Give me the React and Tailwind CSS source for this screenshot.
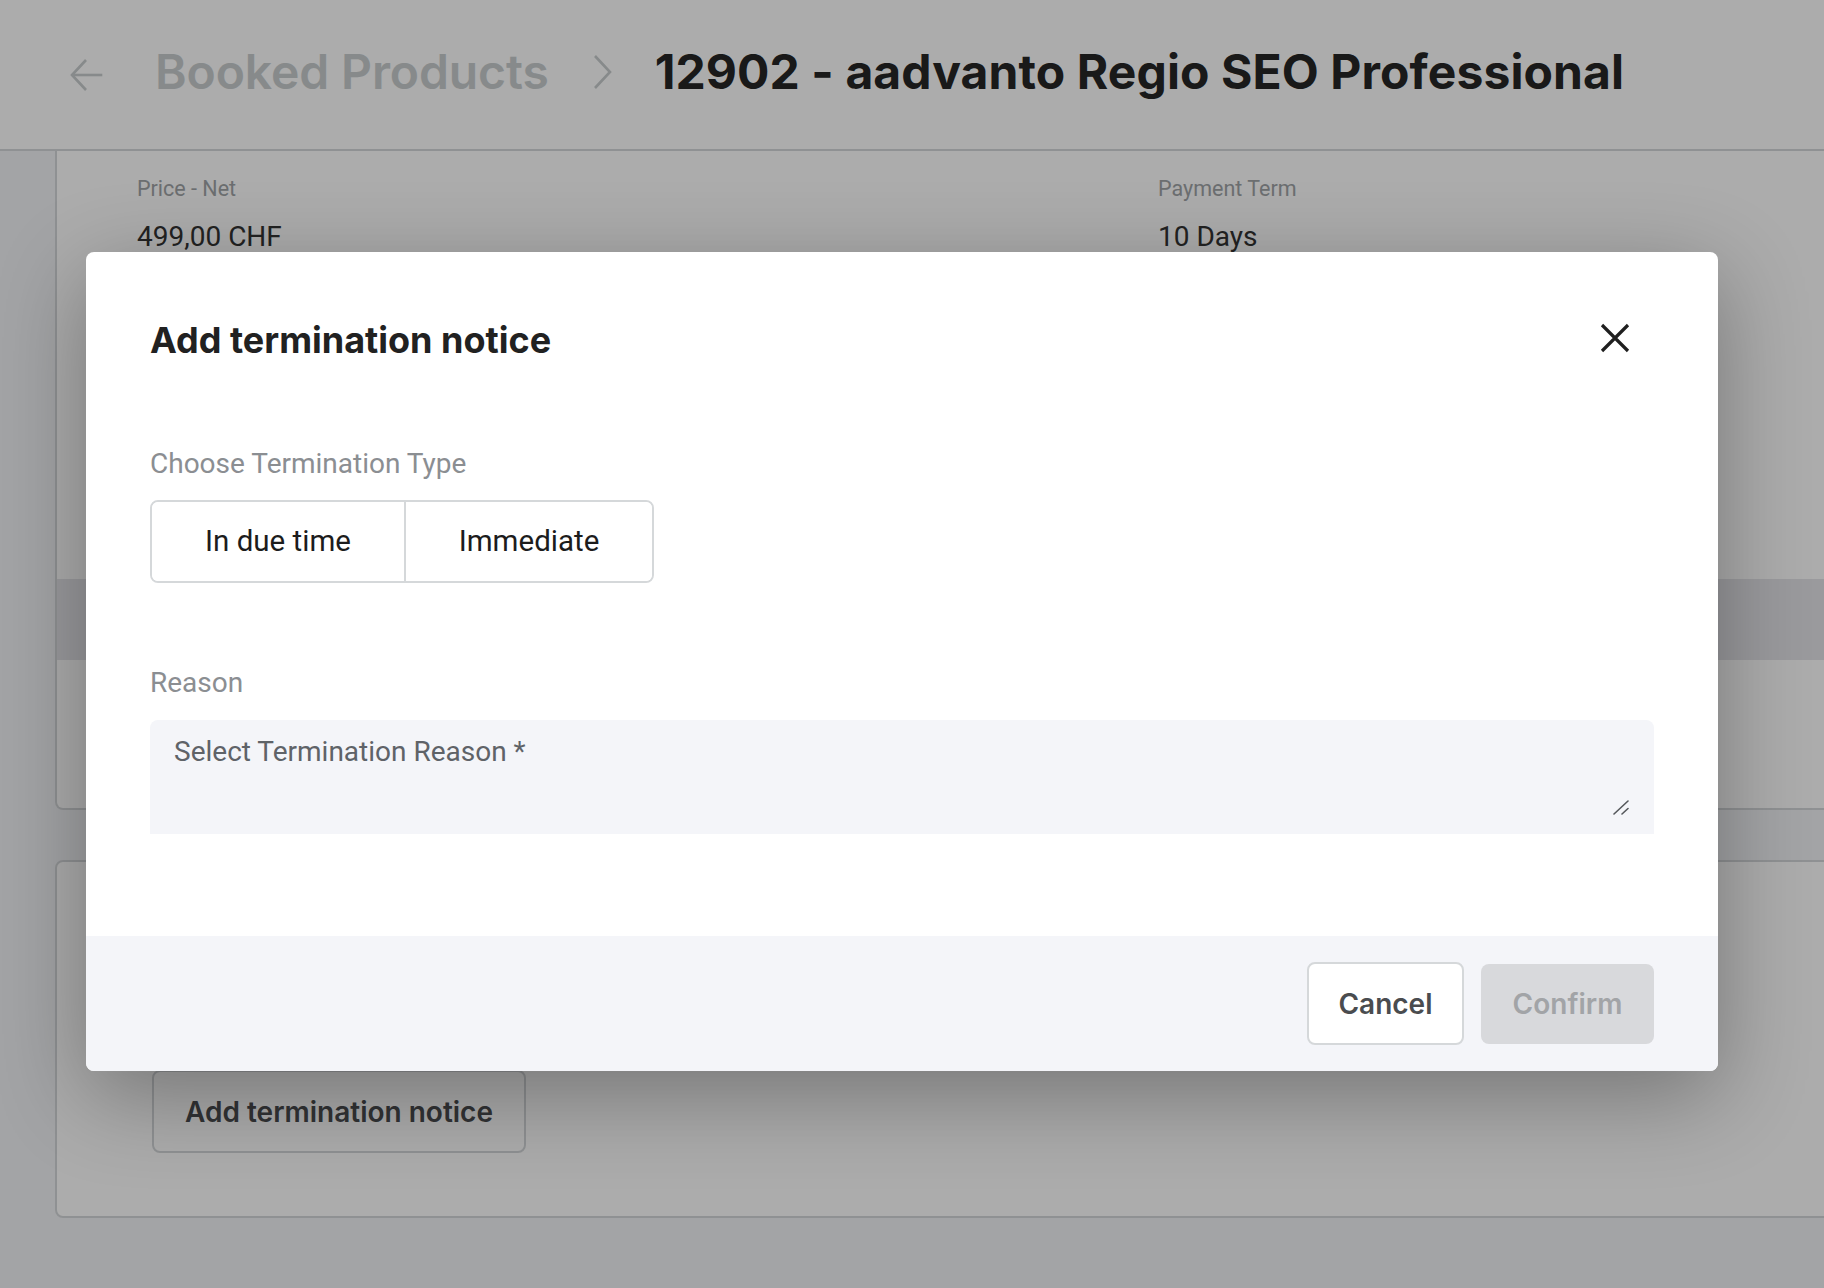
import React, { useState } from "react";

function BackArrow() {
  return (
    <svg width="34" height="34" viewBox="0 0 34 34" fill="none" stroke="currentColor" strokeWidth="2.6" strokeLinecap="square">
      <path d="M32 17H4" />
      <path d="M17 2L3 17l14 15" strokeLinecap="butt" />
    </svg>
  );
}

function Chevron() {
  return (
    <svg width="20" height="34" viewBox="0 0 20 34" fill="none" stroke="currentColor" strokeWidth="2.6">
      <path d="M2 1l15 16L2 33" />
    </svg>
  );
}

function CloseIcon() {
  return (
    <svg width="30" height="30" viewBox="0 0 30 30" fill="none" stroke="currentColor" strokeWidth="3.2">
      <path d="M2 2l26 26M28 2L2 28" />
    </svg>
  );
}

function ResizeGrip() {
  return (
    <svg width="16" height="15" viewBox="0 0 16 15" fill="none" stroke="#55585c" strokeWidth="1.6" strokeLinecap="round">
      <path d="M1 14L15 1" />
      <path d="M9 14l6-5.5" />
    </svg>
  );
}

export default function App() {
  const [type, setType] = useState(null);
  const [reason, setReason] = useState("");

  return (
    <div className="relative h-[1288px] w-full overflow-hidden bg-[#f2f3f6] font-['Roboto',sans-serif]">
      {/* Header */}
      <header className="flex h-[151px] items-center border-b-2 border-[#d5d8da] bg-white pb-[5px] pl-[69px] font-['Inter',sans-serif]">
        <span className="mt-[5px] text-[#c8cdce]">
          <BackArrow />
        </span>
        <h2 className="ml-[52px] text-[48px] font-semibold leading-none tracking-[-0.1px] text-[#c8cdce]">Booked Products</h2>
        <span className="ml-[44px] text-[#c8cdce]">
          <Chevron />
        </span>
        <h1 className="ml-[42px] text-[48px] font-bold leading-none tracking-[0.1px] text-[#262626]">
          12902 - aadvanto Regio SEO Professional
        </h1>
      </header>

      <main className="pl-[55px]">
        {/* Product details card */}
        <section className="-mr-8 h-[659px] rounded-b-lg border-x-2 border-b-2 border-[#d5d8da] bg-white">
          <div className="grid grid-cols-[1021px_1fr] pl-[80px] pt-[24px]">
            <div>
              <p className="text-[21.5px] leading-[28px] text-[#a0a4a7]">Price - Net</p>
              <p className="mt-[16px] text-[28px] leading-[36px] text-[#333]">499,00 CHF</p>
            </div>
            <div>
              <p className="text-[21.5px] leading-[28px] text-[#a0a4a7]">Payment Term</p>
              <p className="mt-[16px] text-[28px] leading-[36px] text-[#333]">10 Days</p>
            </div>
          </div>
          <div className="mt-[324px] h-[81px] bg-[#e4e5e9]"></div>
        </section>

        {/* Termination card */}
        <section className="-mr-8 mt-[50px] h-[358px] rounded-lg border-2 border-[#d5d8da] bg-white pl-[95px] pt-[208px]">
          <button className="h-[83px] w-[374px] rounded-lg border-2 border-[#d5d8da] bg-white font-['Inter',sans-serif] text-[28px] font-semibold text-[#4a4c4f]">
            Add termination notice
          </button>
        </section>
      </main>

      {/* Overlay */}
      <div className="absolute inset-0 bg-[rgba(0,0,0,0.325)]"></div>

      {/* Modal */}
      <div className="absolute left-[86px] top-[252px] w-[1632px] overflow-hidden rounded-lg bg-white shadow-[0_24px_90px_rgba(0,0,0,0.32)]">
        <div className="h-[684px] px-16 pt-[66px]">
          <div className="flex items-center justify-between">
            <h3 className="font-['Inter',sans-serif] text-[36px] font-bold leading-[44px] text-[#212121]">Add termination notice</h3>
            <button className="mb-[4px] mr-[24px] text-[#1f1f1f]">
              <CloseIcon />
            </button>
          </div>

          <p className="mt-[84px] text-[28px] leading-[36px] text-[#8b8e92]">Choose Termination Type</p>
          <div className="mt-[18px] inline-flex h-[83px] overflow-hidden rounded-lg border-2 border-[#d5d8da]">
            <button
              onClick={() => setType("due")}
              className={"w-[254px] border-r-2 border-[#d5d8da] text-[29.5px] text-[#1c1c1c] " + (type === "due" ? "bg-[#eef0f4]" : "bg-white")}
            >
              In due time
            </button>
            <button
              onClick={() => setType("immediate")}
              className={"w-[246px] text-[29.5px] text-[#1c1c1c] " + (type === "immediate" ? "bg-[#eef0f4]" : "bg-white")}
            >
              Immediate
            </button>
          </div>

          <p className="mt-[82px] text-[28px] leading-[36px] text-[#8b8e92]">Reason</p>
          <div className="relative mt-[19px] rounded-t-lg bg-[#f4f5f9] px-6 pb-[18px] pt-[14px]">
            <textarea
              value={reason}
              onChange={(e) => setReason(e.target.value)}
              placeholder="Select Termination Reason *"
              className="block h-[82px] w-full resize-none bg-transparent text-[28px] leading-[36px] text-[#1c1c1c] outline-none placeholder:text-[#5f6368]"
            />
            <span className="pointer-events-none absolute bottom-[19px] right-[25px]">
              <ResizeGrip />
            </span>
          </div>
        </div>

        {/* Footer */}
        <div className="flex h-[135px] items-center justify-end gap-[17px] bg-[#f4f5f9] pr-16 font-['Inter',sans-serif]">
          <button className="h-[83px] w-[157px] rounded-lg border-2 border-[#d5d8da] bg-white text-[28px] font-semibold text-[#4a4c4f]">
            Cancel
          </button>
          <button disabled className="h-[80px] w-[173px] rounded-lg bg-[#d8d9dc] text-[28px] font-semibold text-[#a2a4a7]">
            Confirm
          </button>
        </div>
      </div>
    </div>
  );
}
